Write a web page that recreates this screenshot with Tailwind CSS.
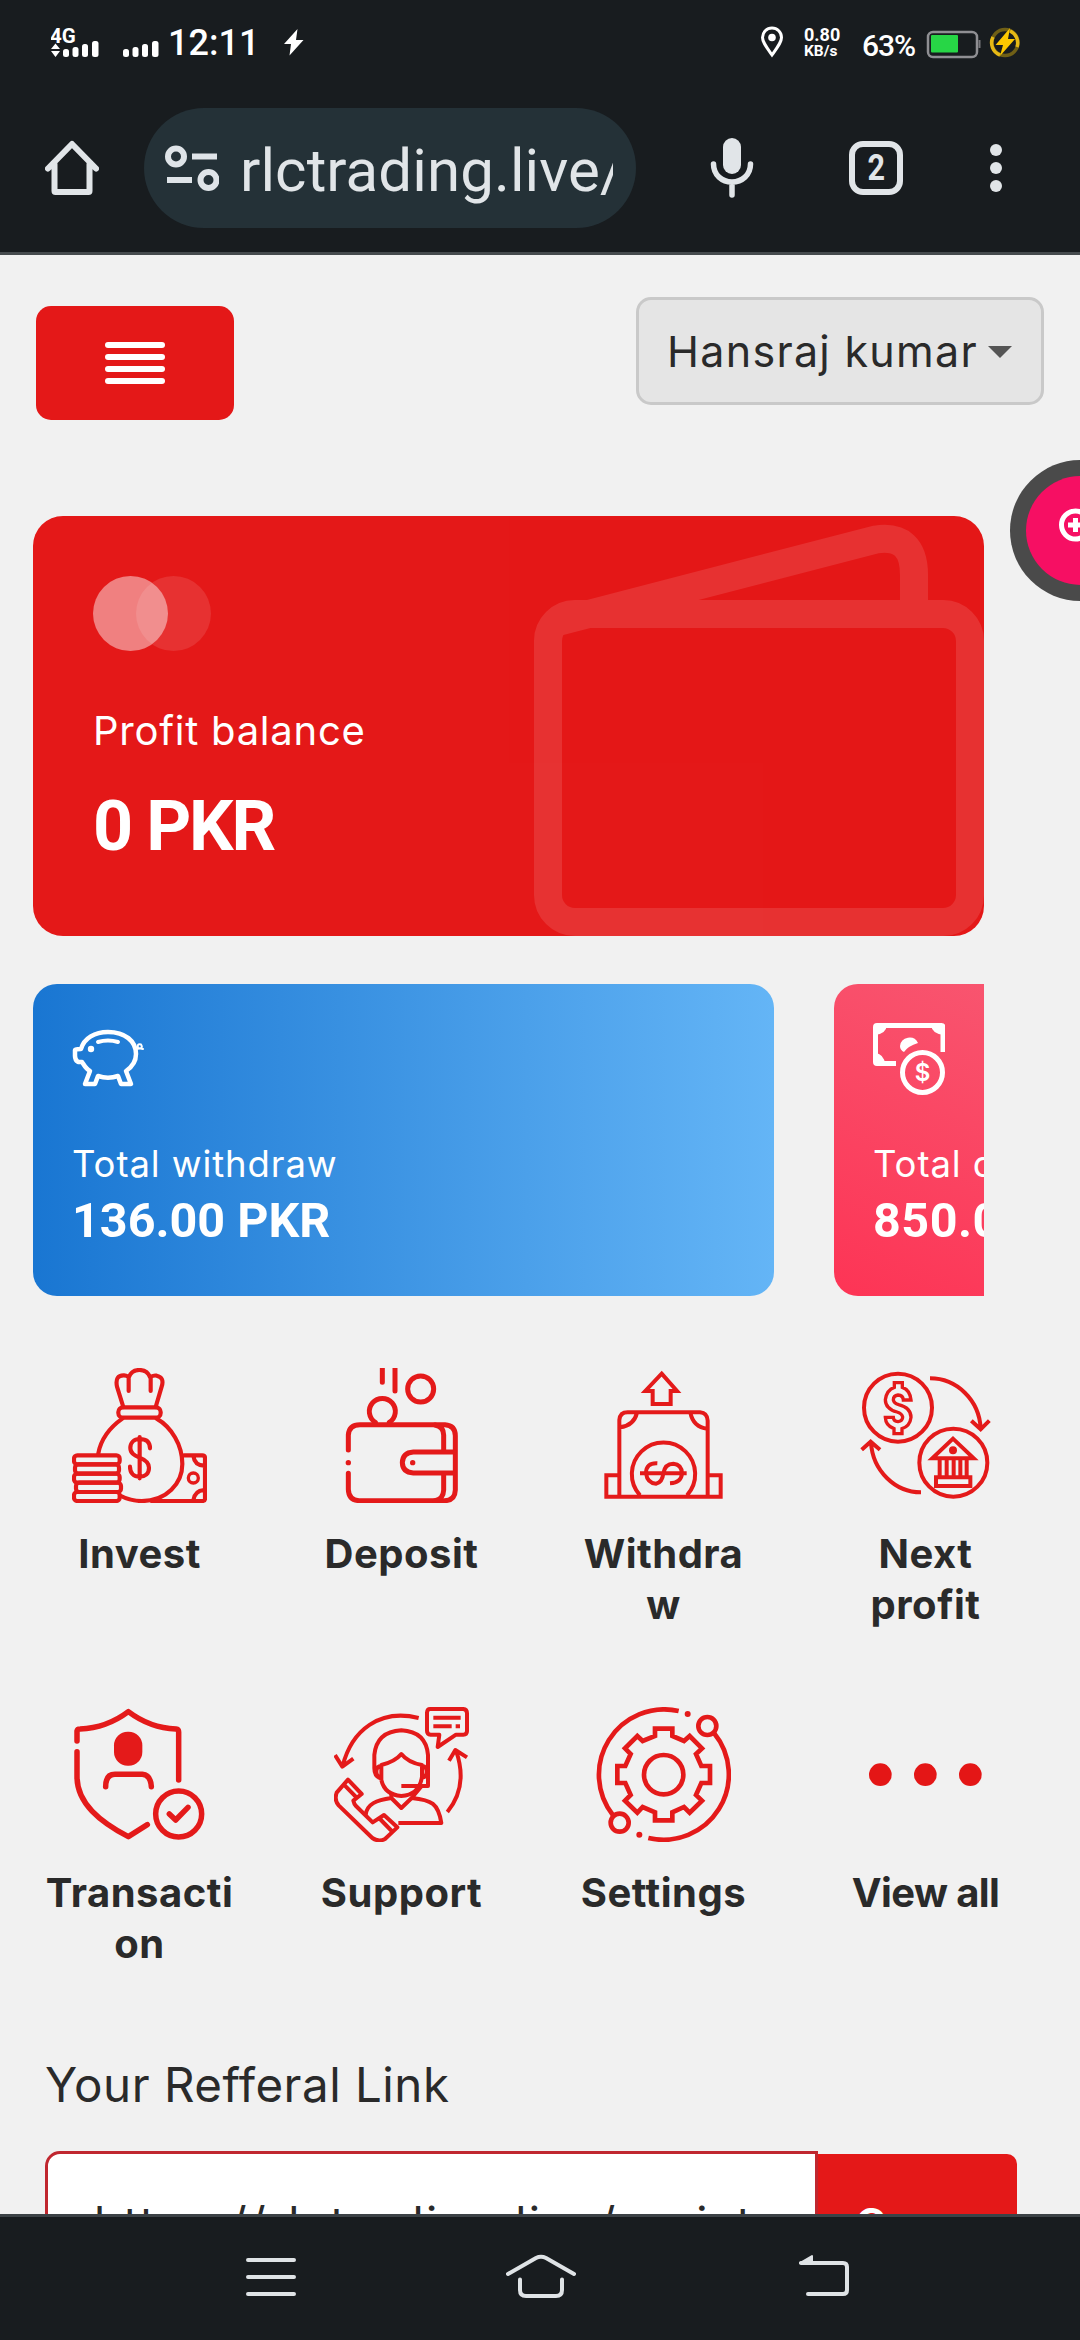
<!DOCTYPE html>
<html lang="en">
<head>
<meta charset="utf-8">
<title>Dashboard</title>
<script src="https://cdn.jsdelivr.net/npm/@tailwindcss/browser@4"></script>
</head>
<body class="bg-[#f1f1f1]">
<div class="flex h-[2340px] w-[1080px] flex-col overflow-hidden font-[Inter,sans-serif] text-[#2a2a2a]">

  <!-- Status bar and browser toolbar -->
  <header class="flex h-[255px] shrink-0 flex-col border-b-3 border-[#464b4e] bg-[#181c1f] font-[Roboto,sans-serif]">
    <div class="flex h-[84px] items-start pl-[51px] text-white">
      <svg class="mt-[24px] h-9 w-[120px]" viewBox="0 24 120 36" fill="#fff">
        <text x="-1" y="42.500" font-family="Roboto" font-weight="700" font-size="20.500">4G</text>
        <path d="M0 49 4.500 43.500 9 49ZM0 51h9l-4.500 6Z"/>
        <rect x="12" y="49" width="6" height="8" rx="2.500"/><rect x="21.500" y="47" width="6" height="10" rx="2.500"/><rect x="31" y="44" width="6" height="13" rx="2.500"/><rect x="41" y="41" width="6.500" height="16" rx="2.500"/>
        <rect x="72" y="49" width="6" height="8" rx="2.500"/><rect x="81.500" y="47" width="6" height="10" rx="2.500"/><rect x="91" y="44" width="6" height="13" rx="2.500"/><rect x="101" y="41" width="6.500" height="16" rx="2.500"/>
      </svg>
      <span class="ml-[-3px] mt-[23px] w-[90px] text-[36px] font-medium leading-[40px]">12:11</span>
      <svg class="ml-[26px] mt-[28px] h-7 w-5" viewBox="0 0 20 28" fill="#fff"><path d="M13.500 1 0 16h7L5.500 27.500 19.500 12h-7.500Z"/></svg>
      <svg class="ml-[456px] mt-[26px] h-8 w-6" viewBox="0 0 24 32" fill="none" stroke="#fff" stroke-width="3"><path d="M12 29C6 20.500 2.500 16 2.500 11.500a9.500 9.500 0 0 1 19 0C21.500 16 18 20.500 12 29Z"/><circle cx="12" cy="11.500" r="3.800" fill="#fff" stroke="none"/></svg>
      <div class="ml-[20px] mt-[26px] w-[56px] whitespace-nowrap font-bold">
        <div class="text-[18px] leading-[18px]">0.80</div>
        <div class="text-[15.500px] leading-[15px]">KB/s</div>
      </div>
      <span class="ml-[2px] mt-[26px] w-[56px] text-[30px] font-medium leading-[40px] tracking-[-1px]">63%</span>
      <svg class="ml-[8px] mt-[29px] h-[30px] w-[56px]" viewBox="0 0 56 30"><rect x="2" y="3" width="49" height="25" rx="5" fill="none" stroke="#8f8f93" stroke-width="2.500"/><path d="M53.500 11v8" stroke="#77777b" stroke-width="2"/><rect x="5" y="6" width="27" height="17.500" rx="1" fill="#27d646"/></svg>
      <svg class="ml-[7px] mt-[26px] h-8 w-8" viewBox="0 0 32 32" fill="none"><circle cx="16" cy="16.500" r="13" stroke="#6f5f16" stroke-width="3.500"/><path d="M4 11a13 13 0 0 0 7 18M21 5a13 13 0 0 1 7 16" stroke="#e6b915" stroke-width="3.500"/><path d="M21 2 6.500 19H14L11 30 26 13h-7Z" fill="#fdc800"/></svg>
    </div>
    <div class="flex items-center pl-[45px] pt-6">
      <svg class="h-[60px] w-[54px]" viewBox="0 0 54 60" fill="none" stroke="#e1e5e8" stroke-width="6" stroke-linecap="round" stroke-linejoin="round"><path d="M3 30.500 27 6l24 24.500M9.500 26v27q0 1 1 1h33q1 0 1-1V26"/></svg>
      <div class="ml-[45px] flex h-[120px] w-[492px] items-center rounded-full bg-[#243137] pl-[21px]">
        <svg class="h-[48px] w-[54px] shrink-0" viewBox="0 0 54 48" fill="none" stroke="#dfe4e8" stroke-width="6"><circle cx="11" cy="12.500" r="8"/><path d="M27 12.500h25M2 36h25"/><circle cx="43.500" cy="36" r="8"/></svg>
        <div class="ml-[21px] mt-[5px] w-[373px] overflow-hidden whitespace-nowrap text-[60px] leading-[76px] tracking-[0.1px] text-[#e1e5e8]">rlctrading.live/</div>
      </div>
      <svg class="ml-[74px] h-[62px] w-[44px]" viewBox="0 0 44 62" fill="none" stroke="#e1e5e8"><rect x="13" y="1" width="18" height="36" rx="9" fill="#e1e5e8" stroke="none"/><path d="M3.500 27C3.500 38 12 45 22 45S40.500 38 40.500 27M22 46v12" stroke-width="5.500" stroke-linecap="round"/></svg>
      <div class="ml-[95px] flex h-[54px] w-[54px] items-center justify-center rounded-[14px] border-6 border-[#e1e5e8] text-[36px] font-bold leading-none text-[#e1e5e8]"><span class="scale-x-85">2</span></div>
      <div class="ml-[87px] flex flex-col gap-[6px]"><i class="size-3 rounded-full bg-[#e1e5e8]"></i><i class="size-3 rounded-full bg-[#e1e5e8]"></i><i class="size-3 rounded-full bg-[#e1e5e8]"></i></div>
    </div>
  </header>

  <main class="relative h-[1959px] shrink-0 overflow-hidden">
    <div class="flex items-start justify-between pl-9 pr-9 pt-[42px]">
      <button class="mt-[9px] flex h-[114px] w-[198px] flex-col items-center justify-center gap-[6px] rounded-[15px] bg-[#e41818]">
        <i class="h-[6px] w-[60px] rounded-full bg-white"></i><i class="h-[6px] w-[60px] rounded-full bg-white"></i><i class="h-[6px] w-[60px] rounded-full bg-white"></i><i class="h-[6px] w-[60px] rounded-full bg-white"></i>
      </button>
      <button class="flex h-[108px] w-[408px] items-center whitespace-nowrap rounded-[15px] border-3 border-[#c9c9c9] bg-[#e5e5e5] pl-[28px] text-[43px] tracking-[1.300px]">
        <span class="w-[312px] text-left">Hansraj kumar</span>
        <svg class="ml-[9px] mt-[2px] h-3 w-6" viewBox="0 0 24 12" fill="#555"><path d="M0 0h24L12 12Z"/></svg>
      </button>
    </div>

    <!-- Floating shortcut, half off the screen edge -->
    <div class="absolute left-[1010px] top-[205px] flex size-[141px] items-center justify-center rounded-full bg-[#4a4a4a]">
      <div class="size-[109px] rounded-full bg-[#f60f63]">
        <svg class="size-full" viewBox="0 0 109 109" fill="none" stroke="#fff" stroke-width="5"><circle cx="49.500" cy="49" r="14"/><path d="M49.500 42v14M42 49h15" stroke-width="5"/></svg>
      </div>
    </div>

    <!-- Profit balance -->
    <section class="relative ml-[33px] mt-[96px] h-[420px] w-[951px] overflow-hidden rounded-[30px] bg-[#e41818] pl-[60px] pt-[60px] text-white">
      <svg class="absolute right-0 top-0 h-[420px] w-[451px]" viewBox="533 516 451 420" fill="none" stroke="#fff" stroke-width="28" opacity="0.11"><rect x="548" y="614" width="422" height="308" rx="27"/><path d="M554 623 876 539.500Q914 534 914 575V606"/></svg>
      <svg class="h-[75px] w-[120px]" viewBox="0 0 120 75" fill="#fff"><circle cx="37.500" cy="37.500" r="37.500" opacity=".45"/><circle cx="80.500" cy="37.500" r="37.500" opacity=".11"/></svg>
      <div class="mt-[52px] text-[40px] leading-[56px] tracking-[0.750px]">Profit balance</div>
      <div class="mt-[27px] font-[Roboto,sans-serif] text-[70px] font-bold leading-[80px] tracking-[-2.200px]">0 PKR</div>
    </section>

    <!-- Totals carousel -->
    <section class="ml-[33px] mt-12 flex h-[312px] w-[951px] gap-[60px] overflow-hidden text-white">
      <article class="w-[741px] shrink-0 rounded-[24px] bg-linear-to-r/srgb from-[#1976d2] to-[#64b5f6] pl-[39px] pt-[39px]">
        <svg class="size-[72px]" viewBox="0 0 72 72" fill="none" stroke="#fff" stroke-width="4.500" stroke-linejoin="round" stroke-linecap="round"><path d="M9 26C12 15 23 9 36 9 53 9 64 18 64 31 64 39 60 44 54 48L59 61H49L46 53C40 55 32 55 26 53L23 61H13L18 48C14 46 12 42 10 39H6Q3 37 3 33V27Q3 26 9 26Z"/><path d="M26 19Q36 16 46 19" stroke-width="4"/><circle cx="19" cy="26" r="3.200" fill="#fff" stroke="none"/><path d="M64 26Q72 26 69 21.500 65 20 66 25L71 26" stroke-width="2"/></svg>
        <div class="mt-[44px] whitespace-nowrap text-[36.500px] leading-[50px] tracking-[0.900px]">Total withdraw</div>
        <div class="mt-[4px] whitespace-nowrap font-[Roboto,sans-serif] text-[48.500px] font-bold leading-[56px]">136.00 PKR</div>
      </article>
      <article class="w-[741px] shrink-0 rounded-[24px] bg-linear-to-tr/srgb from-[#fd3455] to-[#f56a80] pl-[39px] pt-[39px]">
        <svg class="size-[72px]" viewBox="0 0 72 72" fill="none" stroke="#fff" stroke-width="5"><path d="M70 29V4Q70 2.500 68.500 2.500H4Q2.500 2.500 2.500 4V39Q2.500 40.500 4 40.500H23"/><path d="M2 2h12q-1 9-12 10ZM71 2H58q1 9 13 10ZM2 41v-11q9 1 10 11Z" fill="#fff" stroke="none"/><path d="M27 23A9.500 9.500 0 0 1 45 20Q35 23 31 29 27 27 27 23Z" fill="#fff" stroke="none"/><circle cx="49.500" cy="49.500" r="20"/><text x="49.500" y="58" text-anchor="middle" fill="#fff" stroke="none" font-family="Inter" font-weight="600" font-size="24">$</text></svg>
        <div class="mt-[44px] whitespace-nowrap text-[36.500px] leading-[50px] tracking-[0.900px]">Total deposit</div>
        <div class="mt-[4px] whitespace-nowrap font-[Roboto,sans-serif] text-[48.500px] font-bold leading-[56px] tracking-[0.500px]">850.00 PKR</div>
      </article>
    </section>

    <!-- Shortcuts -->
    <nav class="ml-[8.500px] mt-[72px] grid w-[1048px] grid-cols-4 text-center text-[40px] font-bold leading-[51px] tracking-[0.500px]">
      <a class="flex h-[339px] flex-col items-center gap-[25px]">
        <svg class="size-[135px]" viewBox="96 84 405 405" fill="none" stroke="#e41a1a" stroke-width="12.500" stroke-linecap="round" stroke-linejoin="round">
          <path d="M250 201 231 140Q224 105 252 106 264 107 266 113 274 90 298 90 322 90 331 113 338 105 350 107 374 112 365 140L347 201M266 115V153M332 115V153"/>
          <rect x="235" y="202" width="127" height="31" rx="14"/>
          <path d="M247 236C210 262 183 297 175 340M350 236C395 262 427 315 427 372 427 430 380 483 305 483 280 483 260 477 243 468"/>
          <path d="M330 325C330 304 316 297 299 297 281 297 271 309 271 324 271 341 286 347 299 353 314 359 327 366 327 383 327 401 315 410 299 410 281 410 270 399 270 380M299 291V415"/>
          <path d="M432 346H487Q495 346 495 354V476Q495 483 487 483H335M460 348Q464 376 492 377M460 481Q464 452 492 450"/><circle cx="460" cy="414" r="15" stroke-width="10"/>
          <rect x="102" y="346" width="137" height="27" rx="10"/><rect x="105" y="373" width="132" height="28" rx="10"/><rect x="102" y="401" width="137" height="27" rx="10"/><rect x="108" y="428" width="135" height="28" rx="10"/><rect x="102" y="456" width="137" height="27" rx="10"/>
        </svg>Invest</a>
      <a class="flex h-[339px] flex-col items-center gap-[25px]">
        <svg class="size-[135px]" viewBox="882 84 405 405" fill="none" stroke="#e41a1a" stroke-width="15" stroke-linecap="round" stroke-linejoin="round">
          <path d="M1027 84V127M1065 84V153"/><circle cx="1142" cy="147" r="39"/><path d="M1006 247A39 39 0 1 1 1048 247"/>
          <path d="M925 330V285Q927 254 960 254H1215Q1246 256 1246 287V450Q1245 482 1213 482H957Q926 480 925 448V400"/>
          <path d="M1185 255Q1211 260 1211 285V330M1211 406V450Q1210 477 1185 482M1242 336H1120Q1088 338 1087 368 1088 397 1120 399H1242"/>
          <circle cx="925" cy="368" r="8" fill="#e41a1a" stroke="none"/><circle cx="1118" cy="368" r="8" fill="#e41a1a" stroke="none"/>
        </svg>Deposit</a>
      <a class="flex h-[339px] flex-col items-center gap-[25px]">
        <svg class="size-[135px]" viewBox="108 84 405 405" fill="none" stroke="#e41a1a" stroke-width="12">
          <path d="M305 101 351 153H332V192H278V153H256Z"/>
          <path d="M178 469V240Q180 217 203 217H420Q442 219 443 242V469M231 218Q222 256 180 262M391 218Q400 262 442 266"/>
          <path d="M174 406H139V470H482V406H447M240 466A95 95 0 1 1 381 466"/>
          <path d="M292 370Q258 368 258 400 262 430 288 431 307 428 310 400 315 371 340 371 365 373 366 400 364 428 330 430M240 400H380"/>
        </svg>Withdra<br>w</a>
      <a class="flex h-[339px] flex-col items-center gap-[25px]">
        <svg class="size-[135px]" viewBox="894 84 405 405" fill="none" stroke="#e41a1a" stroke-width="12">
          <circle cx="1014" cy="203" r="102"/><circle cx="1180" cy="368" r="102"/>
          <path d="M1110 115C1190 115 1258 180 1262 266M1234 242 1262 268 1288 242M1083 457C1005 457 938 392 933 308M905 329 932 305 960 329"/>
          <path d="M1003 128H1027V142Q1050 150 1053 180H1030Q1029 166 1014 165 1000 167 1000 180 1002 190 1016 194 1053 203 1053 232 1050 258 1026 266V281H1002V266Q977 257 976 232H1000Q1001 244 1014 245 1028 243 1028 231 1026 220 1011 216 976 206 976 179 980 150 1003 142Z" stroke-width="10"/>
          <path d="M1179 296 1117 355H1241ZM1139 358V407M1160 358V407M1181 358V407M1201 358V407M1220 358V407M1128 412H1231V438H1128Z"/><circle cx="1179" cy="331" r="12" fill="#e41a1a" stroke="none"/>
        </svg>Next<br>profit</a>
      <a class="flex h-[339px] flex-col items-center gap-[25px]">
        <svg class="size-[135px]" viewBox="96 81 405 405" fill="none" stroke="#e41a1a" stroke-width="16.500" stroke-linecap="round" stroke-linejoin="round">
          <path d="M111 183V153Q112 147 120 147 200 144 265 95 330 144 408 147 416 148 416 156V300M111 215V290C111 370 180 425 265 470L322 434"/>
          <rect x="222" y="155" width="85" height="102" rx="41" fill="#e41a1a" stroke="none"/><path d="M197 320Q197 283 225 283H307Q332 285 334 320"/>
          <circle cx="416" cy="402" r="69"/><path d="M388 402 407 420 444 382"/>
        </svg>Transacti<br>on</a>
      <a class="flex h-[339px] flex-col items-center gap-[25px]">
        <svg class="size-[135px]" viewBox="882 81 405 405" fill="none" stroke="#e41a1a" stroke-width="12" stroke-linejoin="round">
          <path d="M1136 114C1020 85 935 150 908 258M885 225 907 260 940 236M1222 396C1268 340 1272 280 1248 212M1227 242 1246 210 1281 232"/>
          <path d="M1170 87H1270Q1281 88 1281 100V153Q1281 164 1270 164H1248L1193 201 1198 164H1172Q1161 163 1161 152V98Q1162 87 1170 87ZM1180 113H1262M1180 139H1235M1247 139H1260"/>
          <path d="M1022 295Q1003 290 1003 265V225Q1010 155 1084 151 1158 155 1164 225V318H1084M1024 300V255Q1065 245 1084 222 1105 248 1146 255V290Q1138 345 1084 348 1034 344 1024 300M1024 258Q1009 258 1009 275 1009 291 1024 293M1146 258Q1160 258 1160 275 1160 291 1146 293"/>
          <path d="M1054 341V354L1084 384 1115 354 1145 318M1054 354C1010 360 980 372 977 405M1115 354C1175 360 1195 370 1204 429H1075"/>
          <path d="M924 299 965 342 940 362Q942 372 948 378L998 427 1032 405 1072 442 1035 477Q1016 487 997 474L896 376Q882 360 890 338ZM911 313 950 353M1020 417 1058 456"/>
        </svg>Support</a>
      <a class="flex h-[339px] flex-col items-center gap-[25px]">
        <svg class="size-[135px]" viewBox="108 81 405 405" fill="none" stroke="#e41a1a" stroke-width="14">
          <path d="M285 146H337V168L372 183 389 168 426 205 408 222 424 258H450V309H424L408 345 426 362 389 398 372 381 337 397V421H285V397L248 381 232 398 195 362 212 345 196 309H172V258H196L212 222 195 205 232 168 248 183 285 168Z"/>
          <circle cx="311" cy="284" r="59"/>
          <path d="M356 93A196 196 0 0 0 160 407M265 474A196 196 0 0 0 462 159"/>
          <circle cx="442" cy="138" r="27"/><circle cx="179" cy="428" r="27"/>
          <circle cx="383" cy="102" r="9" fill="#e41a1a" stroke="none"/><circle cx="238" cy="464" r="9" fill="#e41a1a" stroke="none"/>
        </svg>Settings</a>
      <a class="flex h-[339px] flex-col items-center gap-[25px] tracking-[-0.600px]">
        <svg class="size-[135px]" viewBox="894 81 405 405" fill="#e41616"><circle cx="961" cy="284" r="34"/><circle cx="1096" cy="284" r="34"/><circle cx="1231" cy="284" r="34"/></svg>View all</a>
    </nav>

    <!-- Referral link -->
    <h2 class="ml-[45px] mt-[9px] text-[47.500px] leading-[60px] tracking-[0.500px]">Your Refferal Link</h2>
    <div class="ml-[45px] mt-9 flex items-start">
      <div class="h-[144px] w-[773px] overflow-hidden whitespace-nowrap rounded-l-[15px] border-3 border-[#c0272f] bg-white pl-[46px] pr-[46px] text-[46px] leading-[138px] tracking-[2.350px]"><div class="w-[657px] overflow-hidden">https://rlctrading.live/register</div></div>
      <button class="mt-[3px] h-[138px] w-[199px] rounded-r-[10px] bg-[#e41818] pl-[37px] text-left text-[43px] font-semibold leading-[138px] text-white">Copy</button>
    </div>
  </main>

  <footer class="flex h-[126px] shrink-0 items-start border-t-3 border-[#3c4246] bg-[#181c1f] pl-[246px] pt-[35px]">
    <svg class="h-12 w-[50px]" viewBox="0 0 50 48" stroke="#dfe3e6" stroke-width="4" stroke-linecap="round"><path d="M2 8h46M2 25h46M2 42h46"/></svg>
    <svg class="ml-[210px] h-12 w-[70px]" viewBox="0 0 70 48" fill="none" stroke="#dfe3e6" stroke-width="4" stroke-linecap="round" stroke-linejoin="round"><path d="M2 22 30 6Q35 3.500 40 6L68 22M14 27.500V38Q14 44 20 44H50Q56 44 56 38V27.500"/></svg>
    <svg class="ml-[222px] h-12 w-[52px]" viewBox="0 0 52 48" fill="none" stroke="#dfe3e6" stroke-width="4" stroke-linecap="round" stroke-linejoin="round"><path d="M3 11H45Q49 11 49 15V38Q49 42 45 42H10"/><path d="M2 11 14 4V11Z" fill="#dfe3e6" stroke-width="2"/></svg>
  </footer>
</div>
</body>
</html>
